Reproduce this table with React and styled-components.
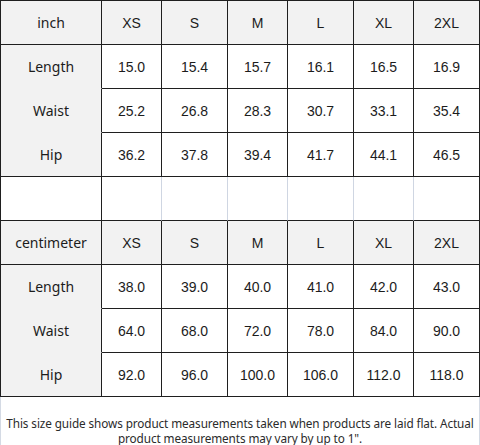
import React from "react";
import styled, { createGlobalStyle } from "styled-components";

const Global = createGlobalStyle`
  html, body { margin: 0; padding: 0; background: #ffffff; }
  body { width: 480px; height: 445px; overflow: hidden; }
`;

const Page = styled.div`
  width: 480px;
  display: flex;
  flex-direction: column;
`;

const Grid = styled.div`
  display: grid;
  grid-template-columns: 101px 60px 66px 60px 66px 60px 66px;
  grid-auto-rows: 44px;
  border-top: 1px solid #1f1f1f;
  border-left: 1px solid #1f1f1f;
`;

const Cell = styled.div`
  box-sizing: border-box;
  display: flex;
  align-items: center;
  justify-content: center;
  font-family: ${(p) => (p.$label ? '"Noto Sans", "Open Sans", sans-serif' : '"Liberation Sans", Arial, sans-serif')};
  font-size: 14px;
  color: #1c1c1c;
  background: ${(p) => (p.$shade ? "#f2f2f2" : "#ffffff")};
  border-right: 1px solid ${(p) => (p.$softRight ? "#cfd6e2" : "#1f1f1f")};
  border-bottom: 1px solid ${(p) => (p.$noBottom ? "transparent" : "#1f1f1f")};
`;

const Footer = styled.div`
  box-sizing: border-box;
  height: 49px;
  padding-top: 19px;
  border-left: 1px solid #d4dae4;
  border-right: 1px solid #d4dae4;
  border-bottom: 1px solid #d4dae4;
  font-family: "Noto Sans", "Open Sans", sans-serif;
  font-size: 11.75px;
  letter-spacing: -0.1px;
  line-height: 15px;
  color: #2b2b2b;
  text-align: center;
  white-space: nowrap;
`;

const sizes = ["XS", "S", "M", "L", "XL", "2XL"];

const groups = [
  {
    unit: "inch",
    rows: [
      ["Length", ["15.0", "15.4", "15.7", "16.1", "16.5", "16.9"]],
      ["Waist", ["25.2", "26.8", "28.3", "30.7", "33.1", "35.4"]],
      ["Hip", ["36.2", "37.8", "39.4", "41.7", "44.1", "46.5"]],
    ],
  },
  {
    unit: "centimeter",
    rows: [
      ["Length", ["38.0", "39.0", "40.0", "41.0", "42.0", "43.0"]],
      ["Waist", ["64.0", "68.0", "72.0", "78.0", "84.0", "90.0"]],
      ["Hip", ["92.0", "96.0", "100.0", "106.0", "112.0", "118.0"]],
    ],
  },
];

function Group({ group }) {
  return (
    <>
      <Cell $label $shade>{group.unit}</Cell>
      {sizes.map((s) => (
        <Cell key={s} $shade>{s}</Cell>
      ))}
      {group.rows.map(([name, vals], i) => (
        <React.Fragment key={name}>
          <Cell $label $shade $noBottom={i < group.rows.length - 1}>{name}</Cell>
          {vals.map((v, j) => (
            <Cell key={j}>{v}</Cell>
          ))}
        </React.Fragment>
      ))}
    </>
  );
}

export default function App() {
  return (
    <Page>
      <Global />
      <Grid>
        <Group group={groups[0]} />
        <Cell />
        {sizes.map((s, j) => (
          <Cell key={s} $softRight={j < sizes.length - 1} />
        ))}
        <Group group={groups[1]} />
      </Grid>
      <Footer>
        This size guide shows product measurements taken when products are laid flat. Actual
        <br />
        product measurements may vary by up to 1".
      </Footer>
    </Page>
  );
}
